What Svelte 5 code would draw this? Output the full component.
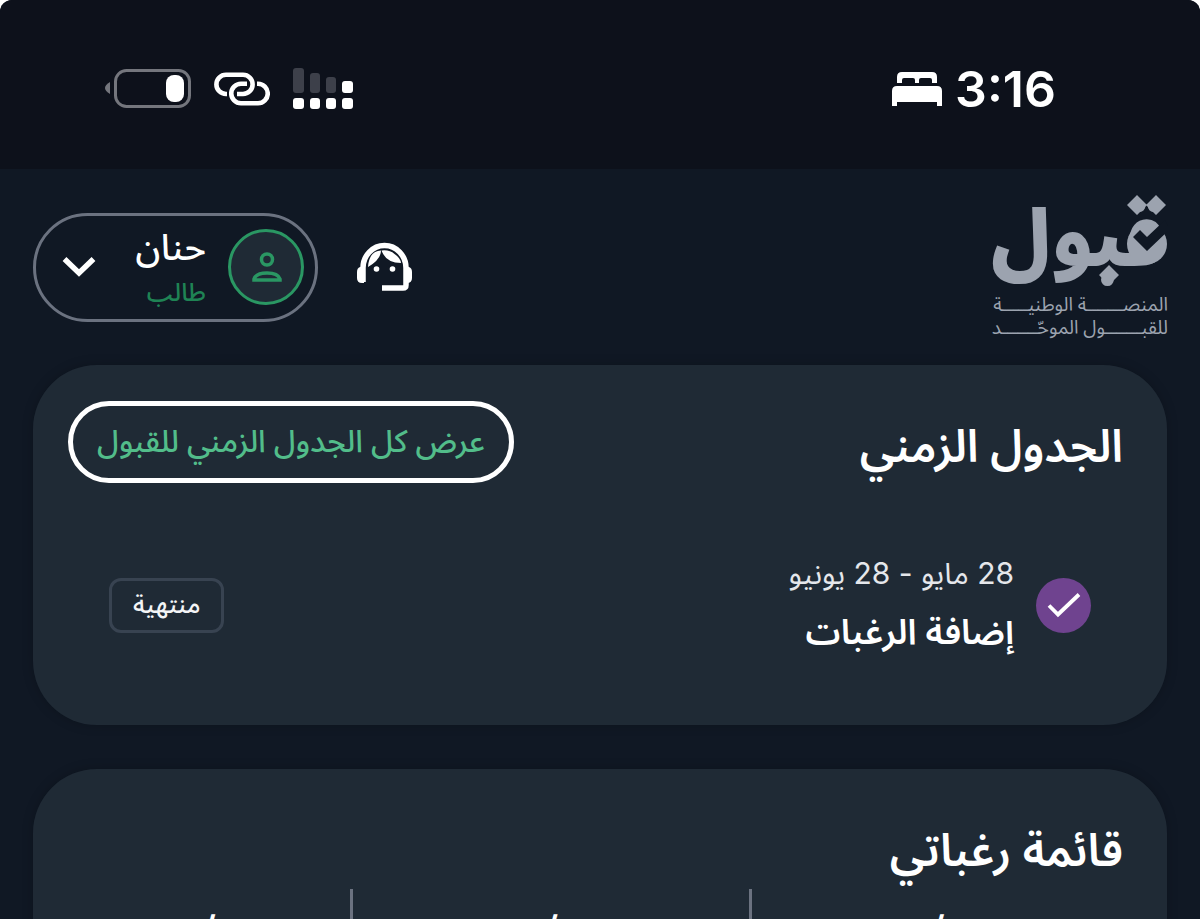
<script>
  const stages = [
    { dates: '28 مايو - 28 يونيو', title: 'إضافة الرغبات', status: 'منتهية' }
  ];
  const counters = ['/', '/', '/'];
</script>

<div class="page" dir="rtl">
  <div class="statusbar">
    <div class="clock">
      <span>3:16</span>
      <svg width="52" height="36" viewBox="0 0 52 36" fill="#fff" aria-hidden="true">
        <path d="M6 12V6q0-5 5-5h30q5 0 5 5v6h-5V9q0-2-2-2h-9q-2 0-2 2v3h-4V9q0-2-2-2h-9q-2 0-2 2v3z" />
        <path d="M1 35V20q0-5 5-5h40q5 0 5 5v15h-5v-4H6v4z" />
      </svg>
    </div>
    <div class="signals">
      <svg width="60" height="42" viewBox="0 0 60 42" aria-hidden="true">
        <g fill="#3d404a">
          <rect x="0" y="0" width="11" height="25" rx="3" />
          <rect x="17" y="5" width="10" height="20" rx="3" />
          <rect x="33" y="9" width="10" height="16" rx="3" />
        </g>
        <g fill="#fff">
          <rect x="49" y="13" width="11" height="12" rx="3" />
          <rect x="0" y="30" width="11" height="11" rx="3" />
          <rect x="17" y="30" width="10" height="11" rx="3" />
          <rect x="33" y="30" width="10" height="11" rx="3" />
          <rect x="49" y="30" width="11" height="11" rx="3" />
        </g>
      </svg>
      <svg width="56" height="34" viewBox="0 0 56 34" fill="none" stroke="#fff" stroke-width="4.600" aria-hidden="true">
        <path d="M13 22h-1A9.600 9.600 0 0 1 12 2.800H29a9.600 9.600 0 0 1 0 19.200H23" />
        <path d="M43 11.800h1a9.600 9.600 0 0 1 0 19.500H27a9.600 9.600 0 0 1 0-19.500H33" />
      </svg>
      <svg width="86" height="40" viewBox="0 0 86 40" aria-hidden="true">
        <path d="M5 13v12Q0 22 0 19t5-6z" fill="#74767d" />
        <rect x="10.500" y="1.500" width="74" height="36" rx="11" fill="none" stroke="#74767d" stroke-width="3" />
        <rect x="61" y="6" width="18" height="27" rx="8" fill="#fff" />
      </svg>
    </div>
  </div>

  <header>
    <a class="brand" href="#home">
      <span class="wordmark">
        قبول
        <svg class="wordmark-marks" width="176" height="96" viewBox="0 0 176 96" aria-hidden="true">
          <path d="m145 1 10 10-10 10-10-10zM164 1l10 10-10 10-10-10zM117 71l10 10-10 10-10-10z" fill="#9ca3af" />
          <circle cx="155" cy="50" r="20" fill="#9ca3af" />
          <path d="m141 43 7-7 7 7 18-17 5 9-23 22z" fill="#101824" />
        </svg>
      </span>
      <span class="tagline">المنصـــــــة الوطنيـــــة</span>
      <span class="tagline">للقبـــــــول الموحّـــــــد</span>
    </a>
    <div class="tools">
      <button class="support" type="button" aria-label="الدعم">
        <svg width="56" height="52" viewBox="0 0 56 52" aria-hidden="true">
          <path d="M6 41V27a21.500 22.500 0 0 1 43 0v17q0 3-3 3H25" fill="none" stroke="#fff" stroke-width="5.500" />
          <path d="M7 25v17H5q-5 0-5-5v-6q0-4 3-5zM48 25v17h2q5 0 5-5v-6q0-4-3-5z" fill="#fff" />
          <path d="M11 26Q12 10 24 9.500q0 9-13 16.500zM24.500 9.500q8-1 13 3.500 6 4 6.500 9Q29 22 24.500 9.500z" fill="#fff" />
          <circle cx="19.500" cy="28" r="2.800" fill="#fff" />
          <circle cx="35.500" cy="28" r="2.800" fill="#fff" />
        </svg>
      </button>
      <button class="account" type="button">
        <span class="avatar">
          <svg width="32" height="30" viewBox="0 0 32 30" fill="none" stroke="#2a9763" stroke-width="3.500" aria-hidden="true">
            <circle cx="17" cy="7.500" r="5.500" />
            <path d="M4 28v-1q2-6 13-6t13 6v1z" />
          </svg>
        </span>
        <span class="who">
          <span class="name">حنان</span>
          <span class="role">طالب</span>
        </span>
        <svg class="chevron" width="34" height="22" viewBox="0 0 34 22" fill="none" stroke="#fff" stroke-width="5.500" aria-hidden="true">
          <path d="M2.500 3 17 17 31.500 3" />
        </svg>
      </button>
    </div>
  </header>

  <main>
    <section class="card timeline">
      <div class="card-head">
        <h2>الجدول الزمني</h2>
        <button class="show-all" type="button">عرض كل الجدول الزمني للقبول</button>
      </div>
      {#each stages as stage}
        <div class="stage">
          <span class="done">
            <svg width="34" height="26" viewBox="0 0 34 26" fill="none" stroke="#fff" stroke-width="3.800" aria-hidden="true">
              <path d="M2 13.500 11 22.500 32 2.500" />
            </svg>
          </span>
          <div class="stage-text">
            <span class="dates">{stage.dates}</span>
            <h3>{stage.title}</h3>
          </div>
          <span class="badge">{stage.status}</span>
        </div>
      {/each}
    </section>

    <section class="card wishes">
      <h2>قائمة رغباتي</h2>
      <div class="counters">
        {#each counters as counter}
          <div class="counter">{counter}</div>
        {/each}
      </div>
    </section>
  </main>
</div>

<style>
  :global(body) {
    background: #fff;
  }
  .page {
    height: 100vh;
    overflow: hidden;
    border-radius: 12px 12px 0 0;
    background: #101824;
    color: #fff;
    font-family: "Noto Sans Arabic", "DejaVu Sans", sans-serif;
  }
  button {
    padding: 0;
    border: 0;
    background: none;
    color: inherit;
    font-family: inherit;
    cursor: pointer;
  }
  svg {
    display: block;
    flex: none;
  }
  h2,
  h3 {
    margin: 0;
  }
  .statusbar {
    display: flex;
    justify-content: space-between;
    align-items: center;
    box-sizing: border-box;
    height: 169px;
    padding: 8px 144px 0 105px;
    background: #0d111b;
  }
  .clock {
    display: flex;
    align-items: center;
    gap: 12px;
    font: 600 50px/56px Inter, sans-serif;
  }
  .signals {
    display: flex;
    align-items: center;
    gap: 23px;
  }
  header {
    display: flex;
    justify-content: space-between;
    align-items: center;
    height: 196px;
    padding: 0 32px 0 33px;
  }
  .brand {
    display: flex;
    flex-direction: column;
    width: 176px;
    color: #9ca3af;
    text-decoration: none;
    white-space: nowrap;
  }
  .wordmark {
    position: relative;
    margin-bottom: 4px;
    font-size: 78px;
    font-weight: 900;
    line-height: 96px;
  }
  .wordmark-marks {
    position: absolute;
    top: 0;
    left: 0;
  }
  .tagline {
    font-size: 19px;
    line-height: 23px;
  }
  .tools {
    display: flex;
    align-items: center;
    gap: 39px;
  }
  .account {
    display: flex;
    align-items: center;
    box-sizing: border-box;
    width: 285px;
    height: 109px;
    padding: 0 11px 0 26px;
    border: 3px solid #6b7280;
    border-radius: 55px;
  }
  .avatar {
    display: grid;
    place-items: center;
    flex: none;
    box-sizing: border-box;
    width: 76px;
    height: 76px;
    border: 3px solid #2a9763;
    border-radius: 50%;
    background: #1f2a35;
  }
  .who {
    display: flex;
    flex-direction: column;
    margin-right: 22px;
    padding-top: 8px;
    text-align: right;
  }
  .name {
    font-size: 36px;
    font-weight: 500;
    line-height: 44px;
  }
  .role {
    color: #1f8354;
    font-size: 25px;
    font-weight: 500;
    line-height: 44px;
  }
  .chevron {
    margin-right: auto;
  }
  main {
    display: flex;
    flex-direction: column;
    gap: 44px;
    padding: 0 33px;
  }
  .card {
    border-radius: 64px;
    background: #1f2a35;
    box-shadow: 0 0 12px rgba(0, 0, 0, 0.2);
  }
  .timeline {
    padding: 36px 44px 60px 35px;
  }
  .card-head {
    display: flex;
    justify-content: space-between;
    align-items: flex-start;
  }
  h2 {
    font-size: 45px;
    font-weight: 600;
    line-height: 94px;
  }
  .show-all {
    box-sizing: border-box;
    height: 82px;
    padding: 0 24px;
    border: 5px solid #fff;
    border-radius: 41px;
    color: #52bd8a;
    font-size: 31px;
    font-weight: 500;
    line-height: 72px;
    white-space: nowrap;
  }
  .stage {
    display: flex;
    align-items: center;
    margin-top: 50px;
    padding: 0 32px 0 41px;
  }
  .done {
    display: grid;
    place-items: center;
    width: 55px;
    height: 55px;
    border-radius: 50%;
    background: #6f438f;
  }
  .stage-text {
    margin-right: 22px;
  }
  .dates {
    display: block;
    color: #e5e7eb;
    font-family: Inter, "Noto Sans Arabic", sans-serif;
    font-size: 30px;
    line-height: 56px;
  }
  h3 {
    font-size: 35px;
    font-weight: 600;
    line-height: 64px;
  }
  .badge {
    box-sizing: border-box;
    height: 55px;
    margin-right: auto;
    padding: 0 21px;
    border: 3px solid #384351;
    border-radius: 12px;
    color: #f3f4f6;
    font-size: 25px;
    font-weight: 500;
    line-height: 49px;
  }
  .wishes {
    padding: 36px 0 48px;
  }
  .wishes h2 {
    padding-right: 44px;
  }
  .counters {
    display: grid;
    grid-template-columns: 374fr 398fr 283fr;
    margin-top: -10px;
    padding: 0 44px 0 34px;
  }
  .counter {
    padding-top: 14px;
    border-left: 3px solid #6b7280;
    font: 500 40px/56px Inter, sans-serif;
    text-align: center;
  }
  .counter:last-child {
    border-left: 0;
  }
</style>
